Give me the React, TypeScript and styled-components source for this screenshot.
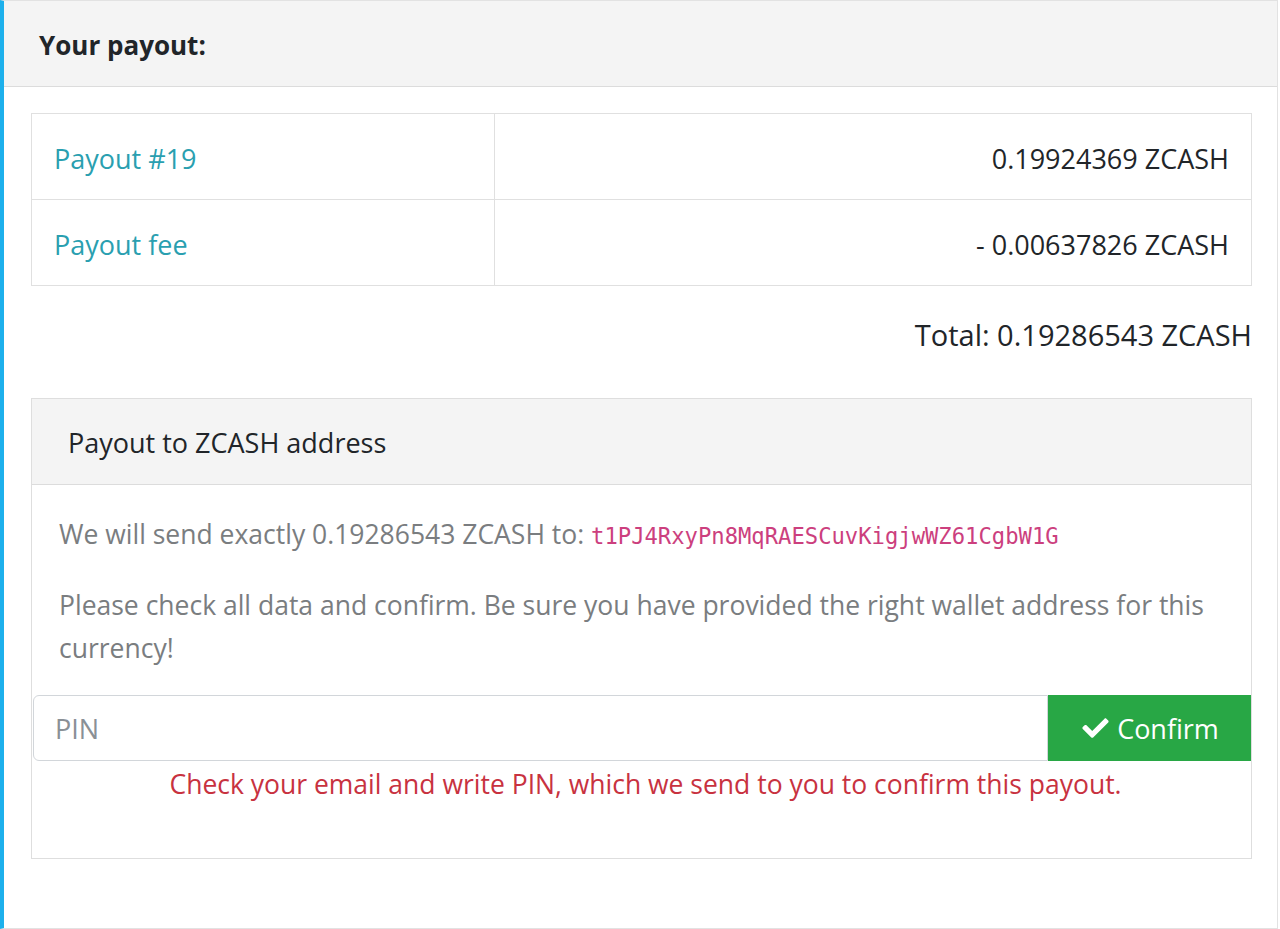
import React from "react";
import styled, { createGlobalStyle } from "styled-components";

const Global = createGlobalStyle`
  html, body { margin: 0; padding: 0; background: #fff; }
  body { font-family: "Open Sans", "Noto Sans", sans-serif; color: #212529; }
  * { box-sizing: border-box; }
`;

const Page = styled.div`
  width: 1280px;
  height: 929px;
  overflow: hidden;
`;

const OuterCard = styled.section`
  height: 929px;
  width: 1278px;
  border: 1px solid #e2e2e2;
  border-left: 4px solid #1db0ec;
  background: #fff;
`;

const OuterHeader = styled.header`
  height: 86px;
  background: #f4f4f4;
  border-bottom: 1px solid #dcdcdc;
  display: flex;
  align-items: center;
  padding: 2px 0 0 35px;
  font-weight: 700;
  font-size: 26px;
  color: #212529;
`;

const OuterBody = styled.div`
  padding: 26px 25px 0 27px;
`;

const Table = styled.table`
  width: 100%;
  border-collapse: collapse;
  font-size: 27px;
`;

const Cell = styled.td<{ $align?: "left" | "right" }>`
  height: 86px;
  border: 1px solid #e0e0e0;
  padding: 3px 22px 0 22px;
  text-align: ${(p) => p.$align ?? "left"};
  vertical-align: middle;
  color: #212529;
`;

const LabelCell = styled(Cell)`
  width: 463px;
  color: #2a9fb0;
`;

const Total = styled.div`
  text-align: right;
  font-size: 29px;
  height: 100px;
  line-height: 98px;
  color: #212529;
`;

const InnerCard = styled.div`
  margin-top: 12px;
  border: 1px solid #dedede;
  height: 461px;
`;

const InnerHeader = styled.div`
  height: 86px;
  background: #f4f4f4;
  border-bottom: 1px solid #dcdcdc;
  display: flex;
  align-items: center;
  padding: 2px 0 0 36px;
  font-size: 27px;
  color: #212529;
`;

const InnerBody = styled.div`
  padding-top: 28px;
`;

const Paragraph = styled.p<{ $gap: number }>`
  margin: 0 0 ${(p) => p.$gap}px 0;
  padding: 0 20px 0 27px;
  font-size: 26.5px;
  line-height: 43px;
  color: #7a7d80;
`;

const Code = styled.code`
  font-family: "DejaVu Sans Mono", "Liberation Mono", monospace;
  font-size: 22.2px;
  color: #cc3f7e;
`;

const InputGroup = styled.div`
  display: flex;
  margin: 0 0 0 1px;
  height: 66px;
`;

const PinInput = styled.input`
  flex: 1;
  height: 66px;
  border: 1px solid #d2d6da;
  border-radius: 6px 0 0 6px;
  padding: 0 21px;
  font-family: "Open Sans", "Noto Sans", sans-serif;
  font-size: 27px;
  color: #495057;
  outline: none;
  &::placeholder { color: #8a9096; }
`;

const ConfirmButton = styled.button`
  width: 203px;
  height: 66px;
  border: none;
  background: #28a745;
  color: #fff;
  font-family: "Open Sans", "Noto Sans", sans-serif;
  font-size: 27px;
  display: flex;
  align-items: center;
  justify-content: center;
  gap: 8px;
  padding: 0 0 0 2px;
  cursor: pointer;
`;

const Hint = styled.div`
  text-align: center;
  font-size: 26.5px;
  color: #c8323f;
  margin-top: 5px;
  padding-left: 8px;
`;

const CheckIcon = () => (
  <svg width="27" height="22" viewBox="0 0 512 430" fill="#fff" aria-hidden="true">
    <path d="M173.898 400.404l-166.4-166.4c-9.997-9.997-9.997-26.206 0-36.204l36.203-36.204c9.997-9.998 26.207-9.998 36.204 0L192 273.69 432.095 33.596c9.997-9.997 26.207-9.997 36.204 0l36.203 36.204c9.997 9.997 9.997 26.206 0 36.204l-294.4 294.401c-9.998 9.997-26.207 9.997-36.204-.001z" />
  </svg>
);

export default function App() {
  return (
    <Page>
      <Global />
      <OuterCard>
        <OuterHeader>Your payout:</OuterHeader>
        <OuterBody>
          <Table>
            <tbody>
              <tr>
                <LabelCell>Payout #19</LabelCell>
                <Cell $align="right">0.19924369 ZCASH</Cell>
              </tr>
              <tr>
                <LabelCell>Payout fee</LabelCell>
                <Cell $align="right">- 0.00637826 ZCASH</Cell>
              </tr>
            </tbody>
          </Table>
          <Total>Total: 0.19286543 ZCASH</Total>
          <InnerCard>
            <InnerHeader>Payout to ZCASH address</InnerHeader>
            <InnerBody>
              <Paragraph $gap={26}>
                We will send exactly 0.19286543 ZCASH to: <Code>t1PJ4RxyPn8MqRAESCuvKigjwWZ61CgbW1G</Code>
              </Paragraph>
              <Paragraph $gap={25}>
                Please check all data and confirm. Be sure you have provided the right wallet address for this currency!
              </Paragraph>
              <InputGroup>
                <PinInput placeholder="PIN" />
                <ConfirmButton>
                  <CheckIcon />
                  Confirm
                </ConfirmButton>
              </InputGroup>
              <Hint>Check your email and write PIN, which we send to you to confirm this payout.</Hint>
            </InnerBody>
          </InnerCard>
        </OuterBody>
      </OuterCard>
    </Page>
  );
}
